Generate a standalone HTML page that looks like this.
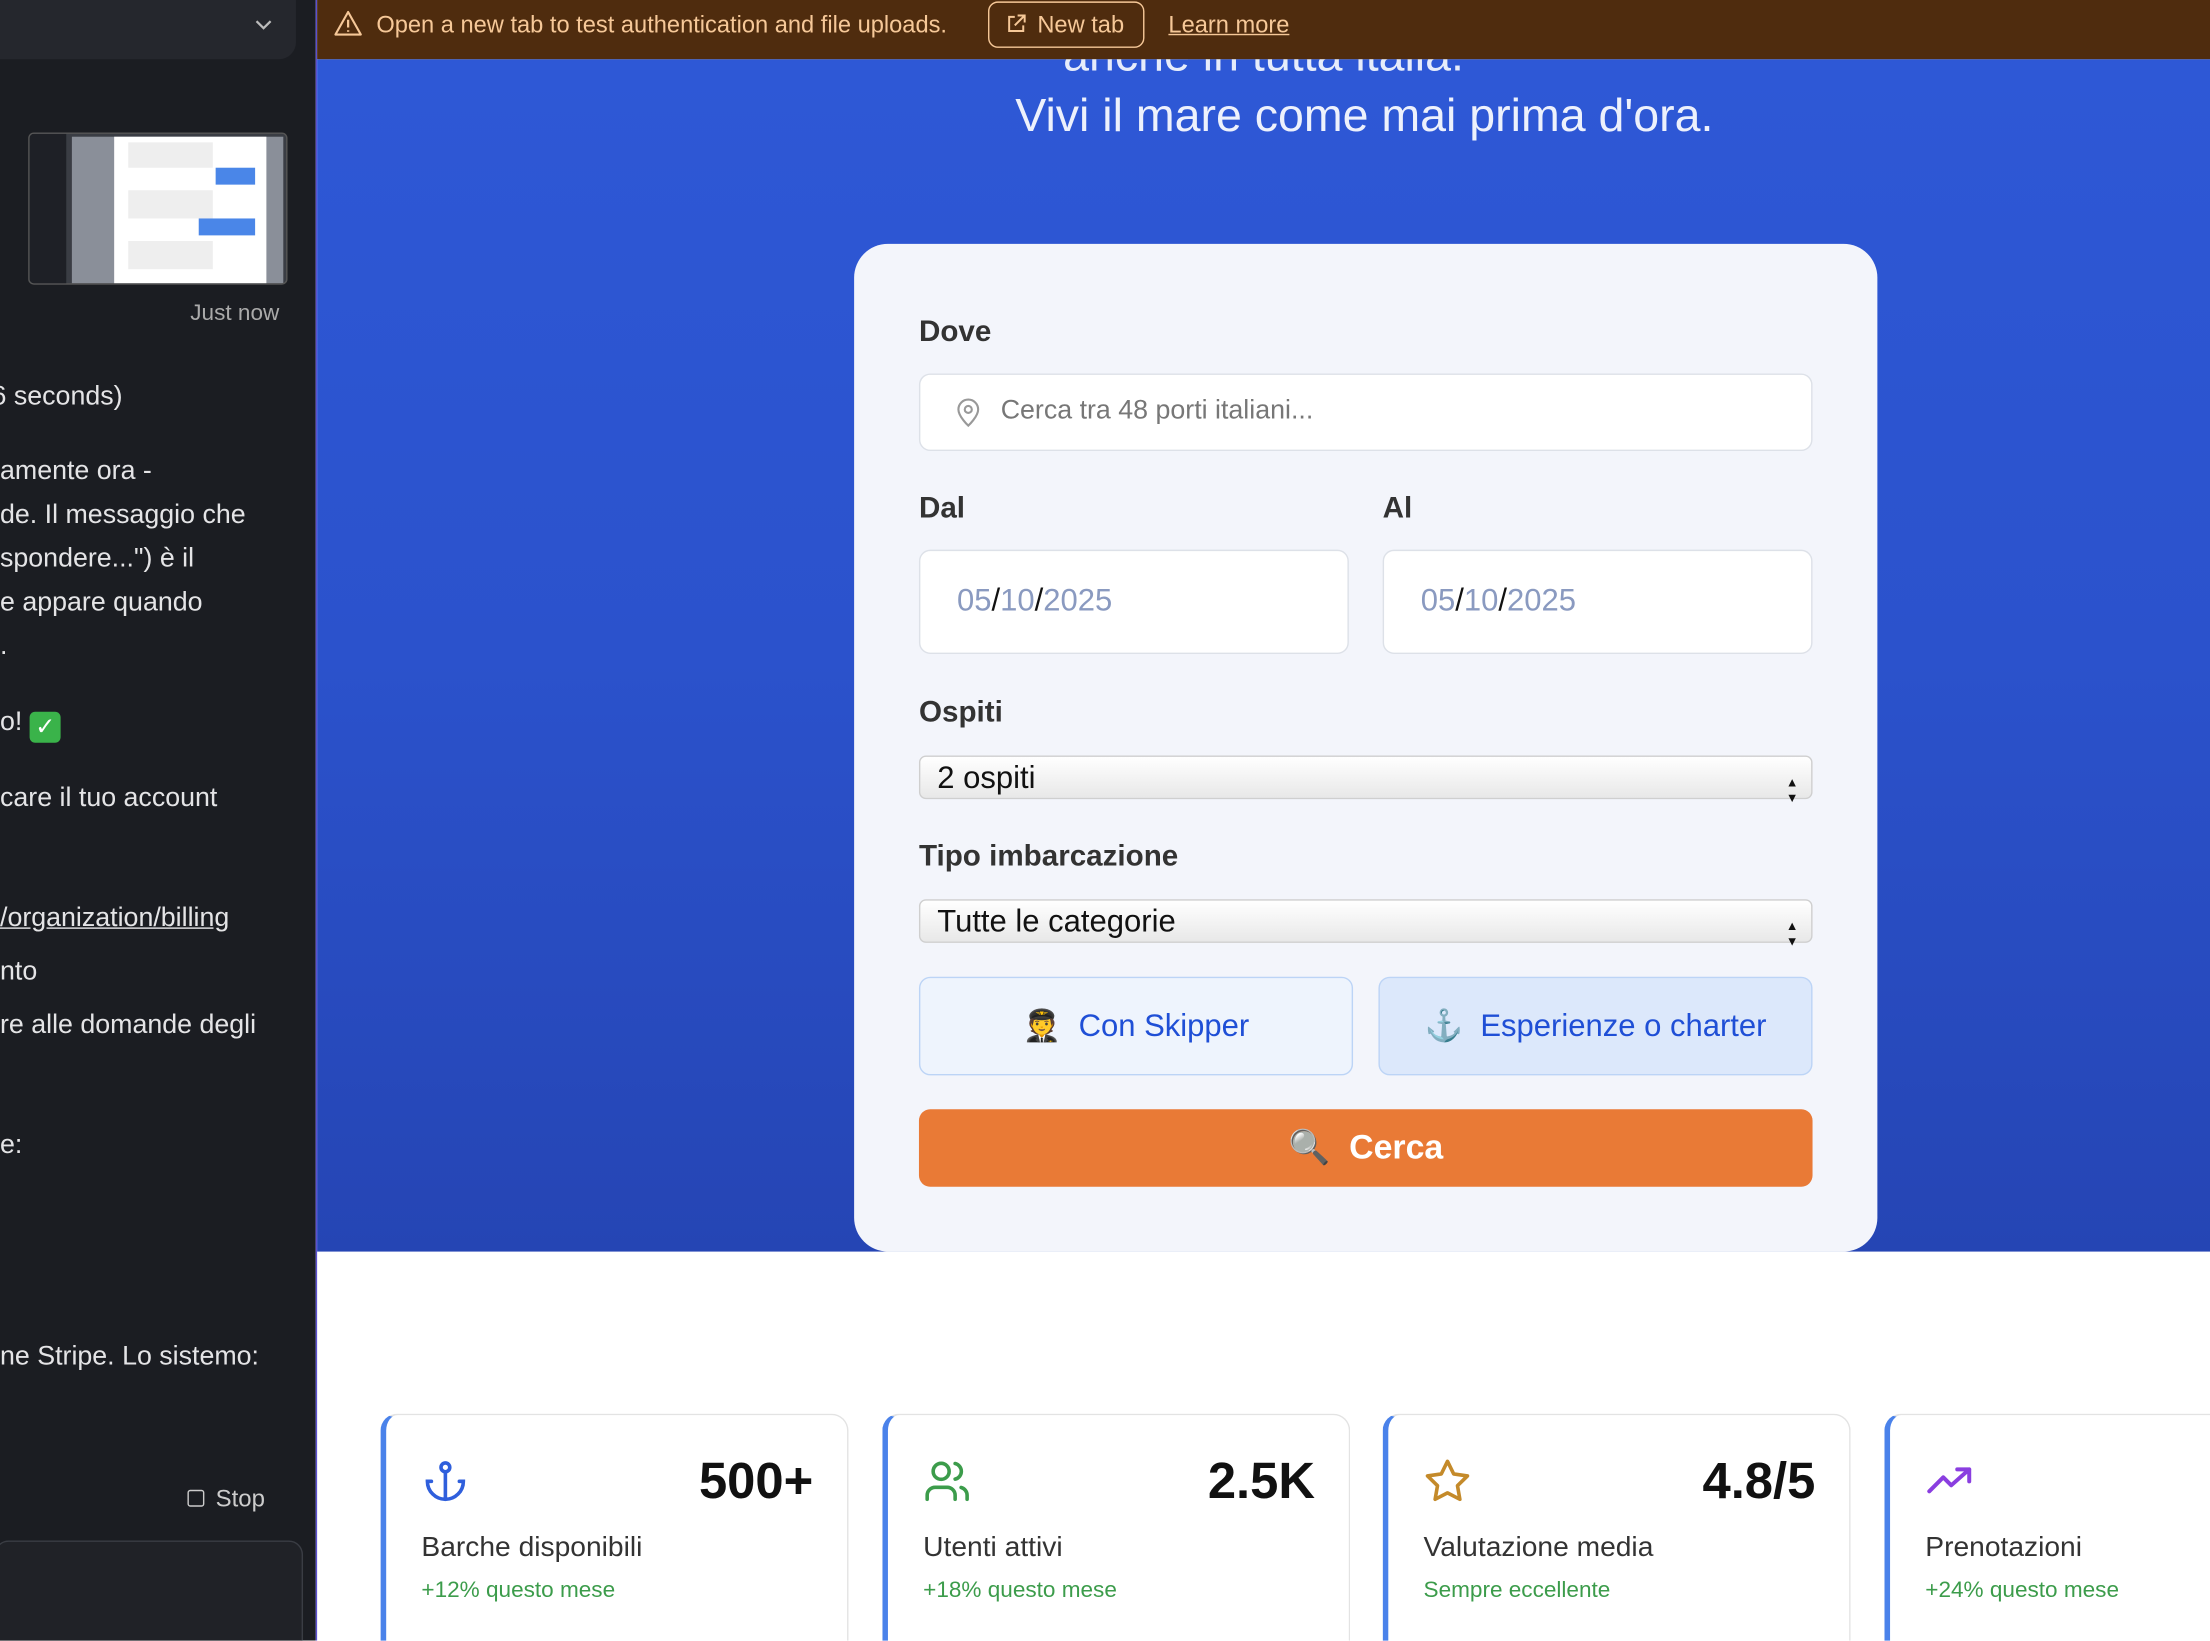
<!DOCTYPE html>
<html><head><meta charset="utf-8"><style>
*{box-sizing:border-box;margin:0;padding:0}
html,body{width:2210px;height:1640px;overflow:hidden;background:#fff}
#w{position:absolute;left:0;top:0;width:1568px;height:1164px;transform:scale(1.40944);transform-origin:0 0;font-family:"Liberation Sans",sans-serif;overflow:hidden}
.a{position:absolute}
#side{left:0;top:0;width:224px;height:1164px;background:#1b1d22;color:#e4e4e6;font-size:19px}
#side .t{position:absolute;left:0;white-space:nowrap}
#banner{left:225px;top:0;width:1343px;height:42px;background:#4f2c0e;color:#f6c898;font-size:16.8px}
#hero{left:225px;top:42px;width:1343px;height:846px;background:linear-gradient(180deg,#2e58d6 0%,#2b52cc 50%,#2545b4 100%)}
#card{left:606px;top:173px;width:726px;height:715px;background:#f3f5fb;border-radius:24px}
.lbl{position:absolute;font-size:21px;font-weight:bold;color:#333}
.inp{position:absolute;background:#fff;border:1.5px solid #dde1e8;border-radius:8px}
.date{font-size:22px;color:#8a9ac0;padding-left:26px;line-height:70px}
.date b{color:#111;font-weight:normal}
.sel{position:absolute;left:652px;width:634px;height:31px;border-radius:5px;border:1px solid #cfcfcf;background:linear-gradient(#fff,#e8e8e8);font-size:22px;color:#111;padding-left:12px;line-height:30px}
.sel:after{content:"▲";position:absolute;right:9px;top:3px;font-size:9px}
.sel:before{content:"▼";position:absolute;right:9px;top:14px;font-size:9px}
.btn{position:absolute;top:693px;height:70px;border:1.5px solid #bcd4f6;border-radius:8px;color:#1f4fd6;font-size:22px;text-align:center;line-height:68px}
.stat{position:absolute;top:1003px;width:332px;height:175px;background:#fff;border:1.5px solid #e3e3e3;border-left:4px solid #4a82ea;border-radius:12px}
.stat .n{position:absolute;right:24px;top:26px;font-size:36px;font-weight:bold;color:#111}
.stat .l{position:absolute;left:25px;top:83px;font-size:20px;color:#333}
.stat .s{position:absolute;left:25px;top:116px;font-size:16px;color:#3c9c4b}
.stat svg{position:absolute;left:25px;top:30px}
</style></head><body><div id="w">
<div id="side" class="a">
 <div class="a" style="left:0;top:0;width:210px;height:42px;background:#25272d;border-radius:0 0 12px 0"></div>
 <svg class="a" style="left:180px;top:12px" width="14" height="12" viewBox="0 0 14 12"><path d="M2 3l5 5 5-5" fill="none" stroke="#bbb" stroke-width="1.6"/></svg>
 <div class="a" style="left:20px;top:94px;width:184px;height:108px;background:#3a3d44;border:1px solid #555;border-radius:4px;overflow:hidden">
  <div class="a" style="left:30px;top:2px;width:150px;height:104px;background:#8a8f99"></div>
  <div class="a" style="left:60px;top:2px;width:108px;height:104px;background:#fff"></div>
  <div class="a" style="left:70px;top:6px;width:60px;height:18px;background:#eee"></div>
  <div class="a" style="left:132px;top:24px;width:28px;height:12px;background:#4a86e8"></div>
  <div class="a" style="left:70px;top:40px;width:60px;height:20px;background:#eee"></div>
  <div class="a" style="left:120px;top:60px;width:40px;height:12px;background:#4a86e8"></div>
  <div class="a" style="left:70px;top:76px;width:60px;height:20px;background:#eee"></div>
  <div class="a" style="left:0;top:0;width:26px;height:108px;background:#1e2026"></div>
 </div>
 <div class="t" style="left:135px;top:214px;font-size:16px;color:#aaa">Just now</div>
 <div class="t" style="left:-6px;top:271px">6 seconds)</div>
 <div class="t" style="top:324px">amente ora -</div>
 <div class="t" style="top:355px">de. Il messaggio che</div>
 <div class="t" style="top:386px">spondere...") è il</div>
 <div class="t" style="top:417px">e appare quando</div>
 <div class="t" style="top:448px">.</div>
 <div class="t" style="top:502px">o! <span style="display:inline-block;width:22px;height:22px;background:#3ab34a;border-radius:4px;color:#fff;font-size:17px;text-align:center;line-height:22px;vertical-align:-3px">✓</span></div>
 <div class="t" style="top:556px">care il tuo account</div>
 <div class="t" style="top:641px;text-decoration:underline">/organization/billing</div>
 <div class="t" style="top:679px">nto</div>
 <div class="t" style="top:717px">re alle domande degli</div>
 <div class="t" style="top:802px">e:</div>
 <div class="t" style="top:952px">ne Stripe. Lo sistemo:</div>
 <div class="a" style="left:133px;top:1057px;width:12px;height:12px;border:1.5px solid #ccc;border-radius:2px"></div>
 <div class="t" style="left:153px;top:1054px;font-size:17px;color:#ccc">Stop</div>
 <div class="a" style="left:-4px;top:1093px;width:219px;height:80px;border:1px solid #3a3d44;border-radius:10px;background:#202227"></div>
</div>
<div class="a" style="left:224px;top:0;width:1px;height:1164px;background:#5b4fd0"></div>
<div id="hero" class="a"></div>
<div class="a" style="left:225px;top:20px;width:1343px;text-align:center;color:#e6ecfb;font-size:33px">anche in tutta italia.</div>
<div id="banner" class="a">
 <svg class="a" style="left:12px;top:7px" width="20" height="19" viewBox="0 0 20 19"><path d="M10 1.5L1 17.5h18z" fill="none" stroke="#f6c898" stroke-width="1.5" stroke-linejoin="round"/><path d="M10 7v5.5M10 14.5v1" stroke="#f6c898" stroke-width="1.6"/></svg>
 <div class="a" style="left:42px;top:8px">Open a new tab to test authentication and file uploads.</div>
 <div class="a" style="left:476px;top:1px;width:111px;height:33px;border:1.5px solid #f6c898;border-radius:7px"></div>
 <svg class="a" style="left:489px;top:10px" width="14" height="14" viewBox="0 0 14 14"><path d="M6 2H2v10h10V8M8 1h5v5M13 1L6 8" fill="none" stroke="#f6c898" stroke-width="1.4"/></svg>
 <div class="a" style="left:511px;top:8px">New tab</div>
 <div class="a" style="left:604px;top:8px;text-decoration:underline">Learn more</div>
</div>
<div class="a" style="left:225px;top:63px;width:1486px;text-align:center;color:#edf1fc;font-size:33px">Vivi il mare come mai prima d'ora.</div>
<div id="card" class="a"></div>
<div class="lbl" style="left:652px;top:224px">Dove</div>
<div class="inp" style="left:652px;top:265px;width:634px;height:55px"></div>
<svg class="a" style="left:677px;top:282px" width="20" height="22" viewBox="0 0 20 22"><path d="M10 20s-7-6.5-7-11.5a7 7 0 0 1 14 0C17 13.5 10 20 10 20z" fill="none" stroke="#999" stroke-width="1.5"/><circle cx="10" cy="8.5" r="2.5" fill="none" stroke="#999" stroke-width="1.5"/></svg>
<div class="a" style="left:710px;top:281px;font-size:19px;color:#777">Cerca tra 48 porti italiani...</div>
<div class="lbl" style="left:652px;top:349px">Dal</div>
<div class="lbl" style="left:981px;top:349px">Al</div>
<div class="inp date" style="left:652px;top:390px;width:305px;height:74px">05<b>/</b>10<b>/</b>2025</div>
<div class="inp date" style="left:981px;top:390px;width:305px;height:74px">05<b>/</b>10<b>/</b>2025</div>
<div class="lbl" style="left:652px;top:494px">Ospiti</div>
<div class="sel" style="top:536px">2 ospiti</div>
<div class="lbl" style="left:652px;top:596px">Tipo imbarcazione</div>
<div class="sel" style="top:638px">Tutte le categorie</div>
<div class="btn" style="left:652px;width:308px;background:#eef4fd;font-family:'Liberation Sans','Noto Color Emoji',sans-serif">🧑‍✈️&nbsp; Con Skipper</div>
<div class="btn" style="left:978px;width:308px;background:#dce8fb">⚓&nbsp; Esperienze o charter</div>
<div class="a" style="left:652px;top:787px;width:634px;height:55px;background:#e97a36;border-radius:8px;color:#fff;font-size:24px;font-weight:bold;text-align:center;line-height:55px">🔍&nbsp; Cerca</div>
<div class="stat" style="left:270px"><svg width="34" height="34" viewBox="0 0 24 24" fill="none" stroke="#2f5fdc" stroke-width="1.8" stroke-linecap="round"><circle cx="12" cy="5" r="2.2"/><path d="M12 7.2V21M5 12H3a9 9 0 0 0 18 0h-2"/></svg><div class="n">500+</div><div class="l">Barche disponibili</div><div class="s">+12% questo mese</div></div>
<div class="stat" style="left:626px"><svg width="34" height="34" viewBox="0 0 24 24" fill="none" stroke="#3c9c4b" stroke-width="1.8" stroke-linecap="round"><circle cx="9" cy="7" r="4"/><path d="M2 21v-2a4 4 0 0 1 4-4h6a4 4 0 0 1 4 4v2M16 3.1a4 4 0 0 1 0 7.8M22 21v-2a4 4 0 0 0-3-3.9"/></svg><div class="n">2.5K</div><div class="l">Utenti attivi</div><div class="s">+18% questo mese</div></div>
<div class="stat" style="left:981px"><svg width="34" height="34" viewBox="0 0 24 24" fill="none" stroke="#c48a2a" stroke-width="1.8" stroke-linejoin="round"><path d="M12 2l3.1 6.3 6.9 1-5 4.9 1.2 6.8L12 17.8 5.8 21l1.2-6.8-5-4.9 6.9-1z"/></svg><div class="n">4.8/5</div><div class="l">Valutazione media</div><div class="s">Sempre eccellente</div></div>
<div class="stat" style="left:1337px"><svg width="34" height="34" viewBox="0 0 24 24" fill="none" stroke="#8a3ee0" stroke-width="2" stroke-linecap="round" stroke-linejoin="round"><path d="M2 17l7-7 4 4 9-8M16 6h6v6"/></svg><div class="l">Prenotazioni</div><div class="s">+24% questo mese</div></div>
</div></body></html>
